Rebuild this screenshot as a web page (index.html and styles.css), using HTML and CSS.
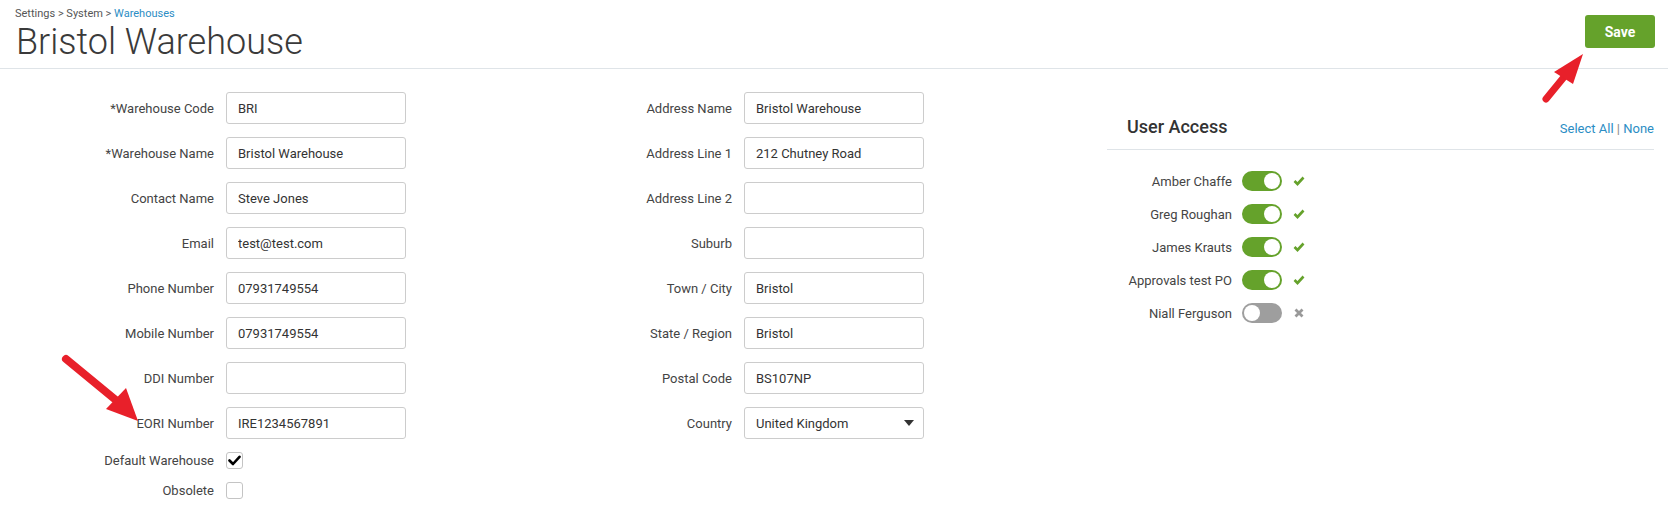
FILE: index.html
```html
<!DOCTYPE html>
<html lang="en">

<head>
    <meta charset="UTF-8">
    <meta name="viewport" content="width=device-width, initial-scale=1.0">
    <title>Bristol Warehouse</title>

    <link rel="stylesheet" href="styles.css">
</head>

<body>
    <div class="header">
        <div class="heading">
            <div class="breadcrumb">Settings &gt; System &gt; <a href="#">Warehouses</a></div>
            <h1>Bristol Warehouse</h1>
        </div>
        <button class="save">Save</button>
    </div>

    <div class="content">
        <div class="form form-left">
            <label>*Warehouse Code</label>
            <input type="text" value="BRI">
            <label>*Warehouse Name</label>
            <input type="text" value="Bristol Warehouse">
            <label>Contact Name</label>
            <input type="text" value="Steve Jones">
            <label>Email</label>
            <input type="text" value="test@test.com">
            <label>Phone Number</label>
            <input type="text" value="07931749554">
            <label>Mobile Number</label>
            <input type="text" value="07931749554">
            <label>DDI Number</label>
            <input type="text" value="">
            <label>EORI Number</label>
            <input type="text" value="IRE1234567891">
            <label>Default Warehouse</label>
            <span class="checkbox checked">
                <svg width="13" height="11" viewBox="0 0 13 11"><path d="M1.5 5.5 L5 9 L11.5 1.8" fill="none" stroke="#000" stroke-width="2.6" stroke-linecap="round" stroke-linejoin="round"/></svg>
            </span>
            <label>Obsolete</label>
            <span class="checkbox"></span>
        </div>

        <div class="form form-right">
            <label>Address Name</label>
            <input type="text" value="Bristol Warehouse">
            <label>Address Line 1</label>
            <input type="text" value="212 Chutney Road">
            <label>Address Line 2</label>
            <input type="text" value="">
            <label>Suburb</label>
            <input type="text" value="">
            <label>Town / City</label>
            <input type="text" value="Bristol">
            <label>State / Region</label>
            <input type="text" value="Bristol">
            <label>Postal Code</label>
            <input type="text" value="BS107NP">
            <label>Country</label>
            <div class="select">
                <span>United Kingdom</span>
                <svg width="10" height="6" viewBox="0 0 10 6"><path d="M0 0 H10 L5 6 Z" fill="#333"/></svg>
            </div>
        </div>

        <div class="access">
            <div class="access-head">
                <h2>User Access</h2>
                <div class="select-links"><a href="#">Select All</a> <span class="sep">|</span> <a href="#">None</a></div>
            </div>
            <div class="users">
                <span class="user-name">Amber Chaffe</span>
                <span class="toggle"><span class="knob"></span></span>
                <svg class="mark" width="12" height="10" viewBox="0 0 12 10"><path d="M1.5 5 L4.5 8 L10.5 1.5" fill="none" stroke="#65a22b" stroke-width="2.6"/></svg>

                <span class="user-name">Greg Roughan</span>
                <span class="toggle"><span class="knob"></span></span>
                <svg class="mark" width="12" height="10" viewBox="0 0 12 10"><path d="M1.5 5 L4.5 8 L10.5 1.5" fill="none" stroke="#65a22b" stroke-width="2.6"/></svg>

                <span class="user-name">James Krauts</span>
                <span class="toggle"><span class="knob"></span></span>
                <svg class="mark" width="12" height="10" viewBox="0 0 12 10"><path d="M1.5 5 L4.5 8 L10.5 1.5" fill="none" stroke="#65a22b" stroke-width="2.6"/></svg>

                <span class="user-name">Approvals test PO</span>
                <span class="toggle"><span class="knob"></span></span>
                <svg class="mark" width="12" height="10" viewBox="0 0 12 10"><path d="M1.5 5 L4.5 8 L10.5 1.5" fill="none" stroke="#65a22b" stroke-width="2.6"/></svg>

                <span class="user-name">Niall Ferguson</span>
                <span class="toggle off"><span class="knob"></span></span>
                <svg class="mark" width="12" height="10" viewBox="0 0 12 10"><path d="M2.5 1.5 L9.5 8.5 M9.5 1.5 L2.5 8.5" fill="none" stroke="#999" stroke-width="2.8"/></svg>
            </div>
        </div>
    </div>

    <!-- annotation arrows drawn over the page -->
    <svg class="arrows" width="1668" height="506" viewBox="0 0 1668 506">
        <line x1="66" y1="359" x2="117" y2="401" stroke="#e8202a" stroke-width="8" stroke-linecap="round"/>
        <polygon points="138,421 106,409 126,388" fill="#e8202a"/>
        <line x1="1546" y1="99" x2="1564" y2="77" stroke="#e8202a" stroke-width="7" stroke-linecap="round"/>
        <polygon points="1583,54 1554,72 1573,84" fill="#e8202a"/>
    </svg>
</body>

</html>
```

FILE: styles.css
```css
body {
    margin: 0;
    font-family: Roboto, "Liberation Sans", sans-serif;
    color: #333;
    background: #fff;
}

a {
    color: #2b8dc4;
    text-decoration: none;
}

.header {
    display: flex;
    justify-content: space-between;
    align-items: flex-start;
    padding: 7px 13px 4px 15px;
    border-bottom: 1px solid #dfe4e8;
}

.breadcrumb {
    font-size: 11px;
    line-height: 13px;
    color: #555;
}

h1 {
    margin: 0 0 0 1px;
    font-size: 36px;
    line-height: 44px;
    font-weight: 300;
    color: #3a3a3a;
}

.save {
    margin-top: 8px;
    width: 70px;
    height: 33px;
    border: none;
    border-radius: 3px;
    background-color: #65a22b;
    color: #fff;
    font-family: Roboto, "Liberation Sans", sans-serif;
    font-size: 14px;
    font-weight: bold;
    cursor: pointer;
}

.content {
    display: flex;
    align-items: flex-start;
    padding-top: 23px;
}

.form {
    display: grid;
    column-gap: 12px;
    row-gap: 13px;
    align-items: center;
}

.form-left {
    grid-template-columns: 214px 179px;
}

.form-right {
    grid-template-columns: 130px 179px;
    margin-left: 197px;
}

.form label {
    text-align: right;
    font-size: 13px;
    color: #444;
}

.form input,
.select {
    box-sizing: border-box;
    width: 180px;
    height: 32px;
    padding: 0 11px;
    border: 1px solid #ccc;
    border-radius: 3px;
    font-family: Roboto, "Liberation Sans", sans-serif;
    font-size: 13px;
    color: #333;
    outline: none;
}

.select {
    display: flex;
    align-items: center;
    justify-content: space-between;
    padding-right: 9px;
}

.checkbox {
    box-sizing: border-box;
    width: 17px;
    height: 17px;
    border: 1px solid #c4c4c4;
    border-radius: 3px;
    display: flex;
    align-items: center;
    justify-content: center;
}

.access {
    width: 547px;
    margin-left: 184px;
    margin-top: 24px;
}

.access-head {
    display: flex;
    justify-content: space-between;
    align-items: baseline;
    padding: 0 0 12px 20px;
    border-bottom: 1px solid #dfe4e8;
}

h2 {
    margin: 0;
    font-size: 18px;
    font-weight: 500;
    color: #333;
}

.select-links {
    font-size: 13px;
}

.sep {
    color: #888;
}

.users {
    display: grid;
    grid-template-columns: 125px 40px 12px;
    column-gap: 10px;
    row-gap: 13px;
    align-items: center;
    padding-top: 21px;
}

.user-name {
    text-align: right;
    font-size: 13px;
    color: #444;
}

.toggle {
    box-sizing: border-box;
    width: 40px;
    height: 20px;
    padding: 2px;
    border-radius: 10px;
    background-color: #65a22b;
    display: flex;
    justify-content: flex-end;
}

.toggle.off {
    background-color: #9e9e9e;
    justify-content: flex-start;
}

.knob {
    width: 16px;
    height: 16px;
    border-radius: 50%;
    background: #fff;
}

.mark {
    margin-left: 1px;
}

.arrows {
    position: absolute;
    top: 0;
    left: 0;
    pointer-events: none;
}
```
